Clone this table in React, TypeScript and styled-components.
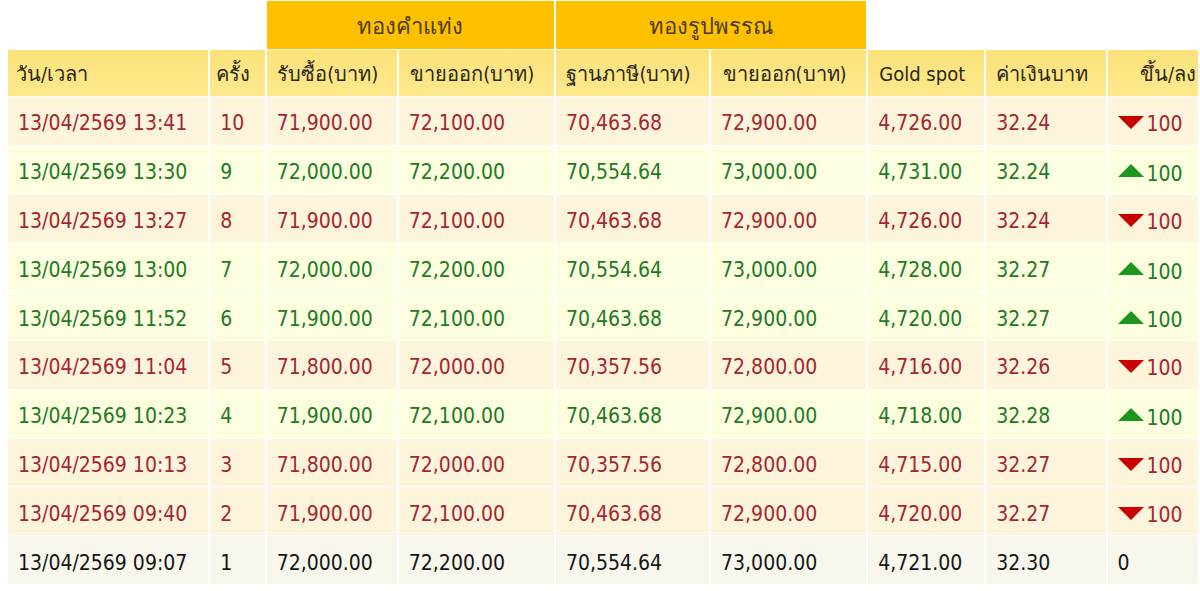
import styled, { createGlobalStyle } from 'styled-components'

type Trend = 'down' | 'up' | 'flat'

interface PriceRow {
  time: string
  round: number
  barBuy: string
  barSell: string
  ornTax: string
  ornSell: string
  spot: string
  thb: string
  trend: Trend
  change: number
}

const rows: PriceRow[] = [
  { time: '13/04/2569 13:41', round: 10, barBuy: '71,900.00', barSell: '72,100.00', ornTax: '70,463.68', ornSell: '72,900.00', spot: '4,726.00', thb: '32.24', trend: 'down', change: 100 },
  { time: '13/04/2569 13:30', round: 9, barBuy: '72,000.00', barSell: '72,200.00', ornTax: '70,554.64', ornSell: '73,000.00', spot: '4,731.00', thb: '32.24', trend: 'up', change: 100 },
  { time: '13/04/2569 13:27', round: 8, barBuy: '71,900.00', barSell: '72,100.00', ornTax: '70,463.68', ornSell: '72,900.00', spot: '4,726.00', thb: '32.24', trend: 'down', change: 100 },
  { time: '13/04/2569 13:00', round: 7, barBuy: '72,000.00', barSell: '72,200.00', ornTax: '70,554.64', ornSell: '73,000.00', spot: '4,728.00', thb: '32.27', trend: 'up', change: 100 },
  { time: '13/04/2569 11:52', round: 6, barBuy: '71,900.00', barSell: '72,100.00', ornTax: '70,463.68', ornSell: '72,900.00', spot: '4,720.00', thb: '32.27', trend: 'up', change: 100 },
  { time: '13/04/2569 11:04', round: 5, barBuy: '71,800.00', barSell: '72,000.00', ornTax: '70,357.56', ornSell: '72,800.00', spot: '4,716.00', thb: '32.26', trend: 'down', change: 100 },
  { time: '13/04/2569 10:23', round: 4, barBuy: '71,900.00', barSell: '72,100.00', ornTax: '70,463.68', ornSell: '72,900.00', spot: '4,718.00', thb: '32.28', trend: 'up', change: 100 },
  { time: '13/04/2569 10:13', round: 3, barBuy: '71,800.00', barSell: '72,000.00', ornTax: '70,357.56', ornSell: '72,800.00', spot: '4,715.00', thb: '32.27', trend: 'down', change: 100 },
  { time: '13/04/2569 09:40', round: 2, barBuy: '71,900.00', barSell: '72,100.00', ornTax: '70,463.68', ornSell: '72,900.00', spot: '4,720.00', thb: '32.27', trend: 'down', change: 100 },
  { time: '13/04/2569 09:07', round: 1, barBuy: '72,000.00', barSell: '72,200.00', ornTax: '70,554.64', ornSell: '73,000.00', spot: '4,721.00', thb: '32.30', trend: 'flat', change: 0 },
]

const colWidths = [201, 55, 131, 156, 154, 156, 117, 120, 91]

const rowTheme: Record<Trend, { bg: string; fg: string }> = {
  down: { bg: '#fdf4dc', fg: '#a5262e' },
  up: { bg: '#fdfee0', fg: '#207a24' },
  flat: { bg: '#f7f7ee', fg: '#151515' },
}

const GlobalStyle = createGlobalStyle`
  html, body {
    margin: 0;
    padding: 0;
    background: #ffffff;
    overflow: hidden;
  }
  body {
    font-family: "DejaVu Sans Condensed", "DejaVu Sans", "Noto Sans", sans-serif;
    font-stretch: condensed;
  }
`

const Page = styled.div`
  width: 1200px;
  height: 591px;
  padding: 0 0 0 6px;
  box-sizing: border-box;
  overflow: hidden;
`

const Table = styled.table`
  table-layout: fixed;
  border-collapse: separate;
  border-spacing: 2px 1px;
  font-size: 21px;
  line-height: 1;
`

const GroupCell = styled.th<{ $filled?: boolean }>`
  height: 48px;
  padding: 4px 0 0;
  box-sizing: border-box;
  background: ${p => (p.$filled ? '#ffc000' : 'transparent')};
  color: #4a3a08;
  font-weight: normal;
  font-size: 22px;
  text-align: center;
`

const HeadCell = styled.th<{ $align?: 'center' | 'left' | 'right' }>`
  height: 46px;
  padding: 2px ${p => (p.$align === 'right' ? '2px' : '8px')} 0 ${p => (p.$align === 'left' ? '8px' : '0')};
  box-sizing: border-box;
  background: linear-gradient(#fce27a, #fde88c);
  color: #2a2616;
  font-weight: normal;
  font-size: 20px;
  text-align: ${p => p.$align ?? 'center'};
  white-space: nowrap;
  overflow: hidden;
`

const DataRow = styled.tr<{ $trend: Trend }>`
  background: ${p => rowTheme[p.$trend].bg};
  color: ${p => rowTheme[p.$trend].fg};
`

const DataCell = styled.td`
  height: 47.8px;
  padding: 6px 0 0 10px;
  box-sizing: border-box;
  white-space: nowrap;
  overflow: hidden;
`

const ChangeWrap = styled.span`
  display: inline-flex;
  align-items: center;
  gap: 3px;
`

const Arrow = styled.svg<{ $up?: boolean }>`
  width: 26px;
  height: 13px;
  margin-top: ${p => (p.$up ? '-7px' : '-4px')};
  flex-shrink: 0;
`

function TrendArrow({ trend }: { trend: Trend }) {
  if (trend === 'flat') return null
  return (
    <Arrow viewBox="0 0 26 13" $up={trend === 'up'}>
      {trend === 'down' ? (
        <polygon points="0,0 26,0 13,13" fill="#c80000" />
      ) : (
        <polygon points="0,13 26,13 13,0" fill="#1c961c" />
      )}
    </Arrow>
  )
}

export default function App() {
  return (
    <Page>
      <GlobalStyle />
      <Table>
        <colgroup>
          {colWidths.map((w, i) => (
            <col key={i} style={{ width: w }} />
          ))}
        </colgroup>
        <thead>
          <tr>
            <GroupCell colSpan={2} />
            <GroupCell colSpan={2} $filled>ทองคำแท่ง</GroupCell>
            <GroupCell colSpan={2} $filled>ทองรูปพรรณ</GroupCell>
            <GroupCell colSpan={3} />
          </tr>
          <tr>
            <HeadCell $align="left">วัน/เวลา</HeadCell>
            <HeadCell>ครั้ง</HeadCell>
            <HeadCell>รับซื้อ(บาท)</HeadCell>
            <HeadCell>ขายออก(บาท)</HeadCell>
            <HeadCell>ฐานภาษี(บาท)</HeadCell>
            <HeadCell>ขายออก(บาท)</HeadCell>
            <HeadCell>Gold spot</HeadCell>
            <HeadCell>ค่าเงินบาท</HeadCell>
            <HeadCell $align="right">ขึ้น/ลง</HeadCell>
          </tr>
        </thead>
        <tbody>
          {rows.map(r => (
            <DataRow key={r.round} $trend={r.trend}>
              <DataCell>{r.time}</DataCell>
              <DataCell>{r.round}</DataCell>
              <DataCell>{r.barBuy}</DataCell>
              <DataCell>{r.barSell}</DataCell>
              <DataCell>{r.ornTax}</DataCell>
              <DataCell>{r.ornSell}</DataCell>
              <DataCell>{r.spot}</DataCell>
              <DataCell>{r.thb}</DataCell>
              <DataCell>
                <ChangeWrap>
                  <TrendArrow trend={r.trend} />
                  {r.change}
                </ChangeWrap>
              </DataCell>
            </DataRow>
          ))}
        </tbody>
      </Table>
    </Page>
  )
}
